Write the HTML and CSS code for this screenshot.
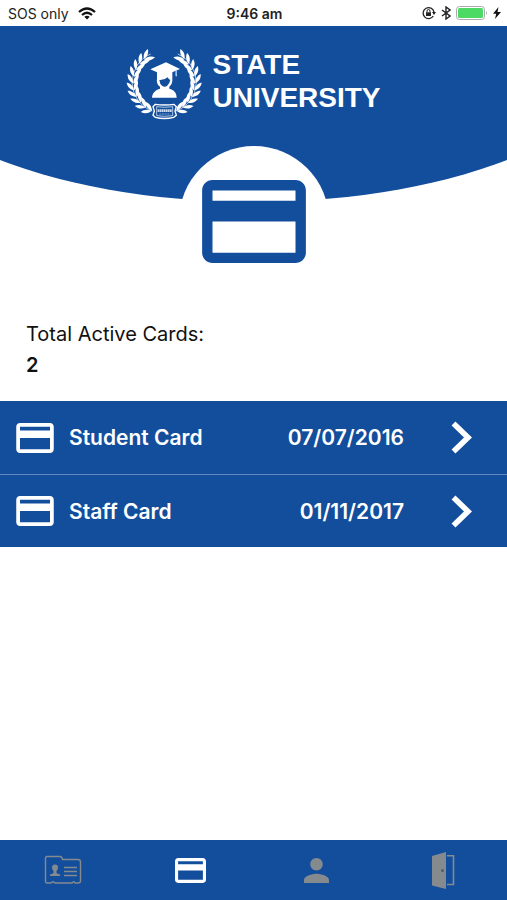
FILE: index.html
```html
<!DOCTYPE html>
<html lang="en">
<head>
<meta charset="utf-8">
<meta name="viewport" content="width=device-width, initial-scale=1">
<title>State University – Cards</title>
<link rel="stylesheet" href="styles.css">
</head>
<body>
<svg class="defs" aria-hidden="true">
  <symbol id="card" viewBox="2 4 20 16">
    <path fill="currentColor" d="M20 4H4c-1.110 0-2 .89-2 2v12c0 1.110.89 2 2 2h16c1.110 0 2-.89 2-2V6c0-1.110-.89-2-2-2zm0 14H4v-6h16v6zm0-10H4V6h16v2z"/>
  </symbol>
  <symbol id="chevron" viewBox="0 0 21 33">
    <path d="M2.500 2.500L17 16.500 2.500 30.500" fill="none" stroke="currentColor" stroke-width="5.600"/>
  </symbol>
  <symbol id="branch" viewBox="0 0 270 270" overflow="visible">
    <path d="M97 225A92 92 0 0 1 92 54" fill="none" stroke="currentColor" stroke-width="2"/>
    <g fill="currentColor">
      <g id="pair"><path d="M39 142C27 136 22 126 23 114C34 119 40 130 39 142Z"/><path d="M40 143C39 130 45 119 56 113C58 126 52 137 40 143Z"/></g>
      <use href="#pair" transform="rotate(-65 132 140)"/>
      <use href="#pair" transform="rotate(-52 132 140)"/>
      <use href="#pair" transform="rotate(-39 132 140)"/>
      <use href="#pair" transform="rotate(-26 132 140)"/>
      <use href="#pair" transform="rotate(-13 132 140)"/>
      <use href="#pair" transform="rotate(13 132 140)"/>
      <use href="#pair" transform="rotate(26 132 140)"/>
      <use href="#pair" transform="rotate(39 132 140)"/>
      <use href="#pair" transform="rotate(51 132 140)"/>
    </g>
  </symbol>
</svg>

<div class="app">
  <div class="status">
    <div class="status-side">
      <span>SOS only</span>
      <svg width="18" height="13" viewBox="0 0 18 13" aria-hidden="true"><g fill="none" stroke="#111" stroke-width="2.300"><path d="M1 5Q9-2 17 5"/><path d="M4 8Q9 3.500 14 8"/></g><path d="M6.300 9.800Q9 7.600 11.700 9.800L9 12.600Z" fill="#111"/></svg>
    </div>
    <span class="status-time">9:46 am</span>
    <div class="status-side status-end">
      <svg width="14" height="14" viewBox="0 0 14 14" aria-hidden="true"><path d="M11.300 10A5.500 5.500 0 1 1 12 6" fill="none" stroke="#222" stroke-width="1.300"/><path d="M10 6h4l-2 3z" fill="#222"/><rect x="4" y="6.300" width="5" height="3.700" fill="#222"/><path d="M5 6.500V5a1.500 1.500 0 0 1 3 0v1.500" fill="none" stroke="#222"/></svg>
      <svg width="10" height="14" viewBox="0 0 10 14" aria-hidden="true"><path d="M1 4l8 6-4 3V1l4 3-8 6" fill="none" stroke="#222" stroke-width="1.400"/></svg>
      <svg width="32" height="14" viewBox="0 0 32 14" aria-hidden="true"><rect x=".5" y=".5" width="28" height="13" rx="3" fill="#fff" stroke="#aaa"/><rect x="2" y="2" width="25" height="10" rx="1.500" fill="#4cd964"/><path d="M30 5q2 2 0 4z" fill="#aaa"/></svg>
      <svg width="8" height="12" viewBox="0 0 8 12" aria-hidden="true"><path d="M5.500 0L0 6.800h3.200L2 12l6-7H4.500z" fill="#111"/></svg>
    </div>
  </div>

  <header class="hero">
    <svg class="emblem" viewBox="18 24 228 228" role="img" aria-label="University emblem">
      <use href="#branch" width="270" height="270"/>
      <use href="#branch" width="270" height="270" transform="translate(265 0) scale(-1 1)"/>
      <path fill="currentColor" d="M91 100L138 79L180 99L171 103V121H167V104L157 109V126C158 140 154 147 148 152V158C162 162 170 170 170 185H96C97 170 107 162 120 158V152C112 147 109 139 111 126V109Z"/>
      <path fill="#134e9d" d="M118 132Q133 133 143 124Q146 131 151 132Q149 143 141 150Q134 154 127 150Q119 144 118 132Z"/>
      <path d="M169 101V119" stroke="#8fc3f5" stroke-width="4"/>
      <path fill="#134e9d" stroke="currentColor" stroke-width="4" d="M106 205Q133 209 162 205L169 212L165 225L169 238L161 244Q133 251 106 244L99 238L103 225L99 212Z"/>
      <path fill="none" stroke="currentColor" stroke-width="2" d="M110 212Q133 216 158 212V239Q133 243 110 239Z"/>
      <path stroke="#c5d8ef" stroke-width="8" stroke-dasharray="5 1" d="M113 224H156"/>
      <path stroke="#7da2d2" stroke-width="3" stroke-dasharray="6 2" d="M118 234H151"/>
    </svg>
    <div class="brand">STATE<br>UNIVERSITY</div>
  </header>

  <main>
    <div class="badge"><svg viewBox="0 0 104 83" aria-hidden="true"><use href="#card" width="104" height="83"/></svg></div>

    <section class="summary">
      <p>Total Active Cards:</p>
      <p class="total">2</p>
    </section>

    <ul class="cards">
      <li><a href="#student">
        <svg class="card-icon" aria-hidden="true"><use href="#card"/></svg>
        <span class="name">Student Card</span>
        <time datetime="2016-07-07">07/07/2016</time>
        <svg class="chevron" aria-hidden="true"><use href="#chevron"/></svg>
      </a></li>
      <li><a href="#staff">
        <svg class="card-icon" aria-hidden="true"><use href="#card"/></svg>
        <span class="name">Staff Card</span>
        <time datetime="2017-11-01">01/11/2017</time>
        <svg class="chevron" aria-hidden="true"><use href="#chevron"/></svg>
      </a></li>
    </ul>
  </main>

  <nav class="tabs" aria-label="Main">
    <a href="#id" aria-label="ID">
      <svg width="38" height="30" viewBox="0 0 38 30"><path d="M3 1.500H16Q18 1.500 18.500 4.500H34Q36.500 4.500 36.500 7V26Q36.500 28 34 28H31Q30 25.500 28 28H11Q9 25.500 7 28H3Q1.500 28 1.500 26V3Q1.500 1.500 3 1.500Z" fill="none" stroke="currentColor" stroke-width="1.400"/><path d="M11 9.500a3 3 0 0 1 3 3q0 2-1.500 3.500v2.200l3.500 1.300V21H6v-1.500l3.500-1.300V16Q8 14.500 8 12.500a3 3 0 0 1 3-3z" fill="currentColor"/><path d="M20 12.500H33M20 16.500H33M20 20.500H33" stroke="currentColor" stroke-width="1.400"/></svg>
    </a>
    <a href="#cards" class="active" aria-label="Cards" aria-current="page">
      <svg width="31" height="25"><use href="#card"/></svg>
    </a>
    <a href="#profile" aria-label="Profile">
      <svg width="25" height="25" viewBox="4 4 16 16"><path fill="currentColor" d="M12 12c2.210 0 4-1.790 4-4s-1.790-4-4-4-4 1.790-4 4 1.790 4 4 4zm0 2c-2.670 0-8 1.340-8 4v2h16v-2c0-2.660-5.330-4-8-4z"/></svg>
    </a>
    <a href="#exit" aria-label="Exit">
      <svg width="23" height="37" viewBox="0 0 23 37"><path d="M0 4L14 0V37L0 33.500Z" fill="currentColor"/><path d="M15 3.800H21.500V32.500H15" fill="none" stroke="currentColor" stroke-width="1.600"/><circle cx="10.500" cy="18.500" r="1.500" fill="#555c66"/></svg>
    </a>
  </nav>
</div>
</body>
</html>
```
FILE: styles.css
```css
:root {
  --blue: #134e9d;
}

* {
  box-sizing: border-box;
}

body {
  margin: 0;
  background: #fff;
  color: #111;
  font-family: Inter, "Liberation Sans", sans-serif;
  font-size: 20px;
}

svg {
  display: block;
  flex: none;
}

a {
  color: inherit;
  text-decoration: none;
}

.defs {
  position: absolute;
  width: 0;
  height: 0;
}

.app {
  display: flex;
  flex-direction: column;
  min-height: 100vh;
}

.status {
  display: flex;
  align-items: center;
  height: 26px;
  padding: 0 6px 0 8px;
  font-size: 14px;
  color: #222;
}

.status-side {
  display: flex;
  flex: 1;
  align-items: center;
  gap: 9px;
}

.status-end {
  justify-content: flex-end;
  gap: 5px;
}

.status-time {
  font-weight: 600;
}

.hero {
  display: flex;
  justify-content: center;
  align-items: flex-start;
  gap: 10px;
  height: 176px;
  padding-top: 18px;
  background: var(--blue);
  color: #fff;
  clip-path: ellipse(75% 165px at 50% 11px);
}

.emblem {
  width: 76px;
  height: 76px;
}

.brand {
  padding-top: 4px;
  font: bold 28px/33px "Liberation Sans", Arial, sans-serif;
}

.badge {
  display: flex;
  justify-content: center;
  align-items: center;
  position: relative;
  width: 150px;
  height: 150px;
  margin: -56px auto 0;
  border-radius: 50%;
  background: #fff;
  color: var(--blue);
}

.badge svg {
  width: 104px;
  height: 83px;
}

main {
  flex: 1;
}

.summary {
  padding: 23px 26px 20px;
  line-height: 31px;
}

.summary p {
  margin: 0;
}

.total {
  font-weight: 600;
}

.cards {
  margin: 0;
  padding: 0;
  list-style: none;
  background: var(--blue);
  color: #fff;
  font-size: 21px;
  font-weight: 600;
}

.cards a {
  display: flex;
  align-items: center;
  height: 73px;
  padding: 0 35px 0 16px;
}

.cards li + li a {
  border-top: 1px solid #6189c0;
}

.card-icon {
  width: 38px;
  height: 30px;
}

.name {
  flex: 1;
  margin-left: 15px;
}

.chevron {
  width: 21px;
  height: 33px;
  margin-left: 47px;
}

.tabs {
  display: grid;
  grid-template-columns: repeat(4, 1fr);
  height: 60px;
  background: var(--blue);
  color: #858a8f;
}

.tabs a {
  display: flex;
  justify-content: center;
  align-items: center;
}

.tabs .active {
  color: #fff;
}
```
